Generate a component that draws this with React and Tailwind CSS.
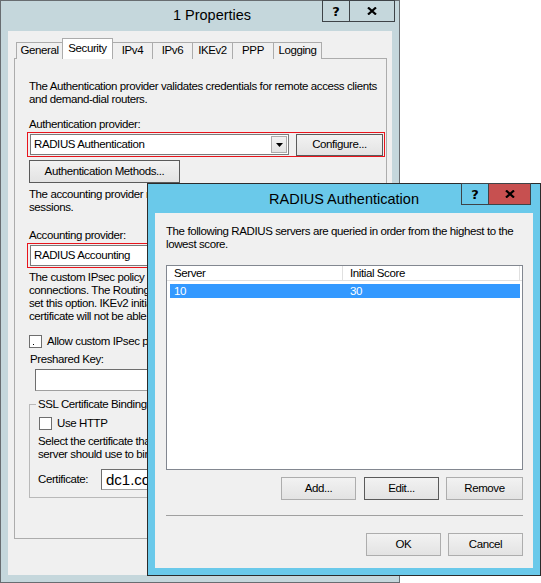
function CaptionButtons({ xw, red }) {
  return (
    <div className="flex">
      <div className="w-[28px] h-[22px] border border-[#3e4347] flex items-center justify-center text-[13px] font-bold leading-none tracking-normal font-['DejaVu_Sans',sans-serif]">
        ?
      </div>
      <div
        className={
          "-ml-px h-[22px] border border-[#3e4347] flex items-center justify-center " +
          (red ? "bg-[#c75050]" : "")
        }
        style={{ width: xw }}
      >
        <svg width="10" height="8" viewBox="0 0 10 8">
          <path d="M1 0.5 L9 7.5 M9 0.5 L1 7.5" stroke="#000" strokeWidth="2.2" />
        </svg>
      </div>
    </div>
  );
}

function Btn({ children, w, dark, h = 23 }) {
  return (
    <div
      className={
        "flex items-center justify-center border bg-linear-to-b from-[#f2f2f2] to-[#e3e3e3] shrink-0 " +
        (dark ? "border-[#5a5a5a]" : "border-[#adadad]")
      }
      style={{ width: w, height: h }}
    >
      {children}
    </div>
  );
}

function Check({ dot }) {
  return (
    <div className="relative w-[13px] h-[13px] border border-[#6e6e6e] bg-white shrink-0">
      {dot && <div className="absolute left-[3px] bottom-[2px] w-px h-px bg-black" />}
    </div>
  );
}

function Tab({ label, w, sel }) {
  return (
    <div
      className={
        "-ml-px first:ml-0 flex justify-center border-t border-l border-r border-[#acacac] whitespace-nowrap " +
        (sel ? "relative z-10 h-[21px] pt-[3px] bg-white" : "h-[17px] pt-[1px] bg-[#f0f0f0]")
      }
      style={{ width: w }}
    >
      {label}
    </div>
  );
}

function RedCombo({ text, arrow }) {
  return (
    <div className="-ml-[2px] mt-px w-[358px] h-[25px] border border-[#e8141c] flex items-center pl-[2px] pr-px shrink-0">
      <div className="w-[259px] h-[21px] border border-[#7a7a7a] bg-white flex items-center pl-[3px] relative shrink-0">
        <span className="whitespace-nowrap">{text}</span>
        {arrow && (
          <div className="absolute right-px top-px bottom-px w-[16px] border border-[#acacac] bg-linear-to-b from-[#f2f2f2] to-[#e3e3e3] flex items-center justify-center">
            <svg width="7" height="4" viewBox="0 0 7 4">
              <path d="M0 0 H7 L3.5 4 Z" fill="#000" />
            </svg>
          </div>
        )}
      </div>
      <div className="ml-[7px]">
        <Btn w={87} h={22} dark>
          Configure...
        </Btn>
      </div>
    </div>
  );
}

function OuterWindow() {
  return (
    <div className="w-[400px] h-[583px] border border-[#686d71] bg-[#c5d7dc] flex flex-col">
      <div className="relative h-[30px] shrink-0">
        <div className="pt-[6px] pl-[24px] text-center text-[14.5px] leading-[17px] tracking-normal">
          1 Properties
        </div>
        <div className="absolute top-[-1px] right-[4px]">
          <CaptionButtons xw={46} />
        </div>
      </div>
      <div className="mx-[7px] mb-[7px] flex-1 bg-[#f0f0f0] pt-[7px] pl-[6px] pr-[5px]">
        <div className="flex items-end h-[21px] -mb-px ml-[2px] relative z-10">
          <Tab label="General" w={47} />
          <Tab label="Security" w={51} sel />
          <Tab label="IPv4" w={41} />
          <Tab label="IPv6" w={41} />
          <Tab label="IKEv2" w={41} />
          <Tab label="PPP" w={42} />
          <Tab label="Logging" w={49} />
        </div>
        <div className="h-[481px] border border-[#acacac] pl-[14px] flex flex-col items-start whitespace-nowrap">
          <div className="mt-[21px]">
            The Authentication provider validates credentials for remote access clients
            <br />
            and demand-dial routers.
          </div>
          <div className="mt-[12px]">Authentication provider:</div>
          <RedCombo text="RADIUS Authentication" arrow />
          <div className="mt-[3px]">
            <Btn w={151} dark>
              Authentication Methods...
            </Btn>
          </div>
          <div className="mt-[5px]">
            The accounting provider maintains a log of connection requests and
            <br />
            sessions.
          </div>
          <div className="mt-[15px]">Accounting provider:</div>
          <RedCombo text="RADIUS Accounting" arrow />
          <div className="mt-[3px]">
            The custom IPsec policy for L2TP/IKEv2 connection allows you to
            <br />
            connections. The Routing and Remote Access service must be started to
            <br />
            set this option. IKEv2 initiator connections using a preshared key
            <br />
            certificate will not be able to connect.
          </div>
          <div className="mt-[12px] h-[13px] flex items-center gap-[5px]">
            <Check dot />
            <span>Allow custom IPsec policy for L2TP/IKEv2 connection</span>
          </div>
          <div className="mt-[5px] ml-px">Preshared Key:</div>
          <div className="mt-[3px] ml-[6px] w-[330px] h-[22px] border border-[#a0a0a0] border-t-[#6e6e6e] border-l-[#6e6e6e] bg-white shrink-0" />
          <fieldset className="mt-[7px] w-[342px] shrink-0 border border-[#b9b9b9] pl-[9px] pt-[6px] pb-[7px]">
            <legend className="-ml-[3px] px-[2px]">SSL Certificate Binding</legend>
            <div className="h-[13px] flex items-center gap-[5px]">
              <Check />
              <span>Use HTTP</span>
            </div>
            <div className="mt-[5px] -ml-px">
              Select the certificate that the remote access
              <br />
              server should use to bind with SSL connections.
            </div>
            <div className="mt-[8px] h-[21px] flex items-center -ml-px">
              <div className="w-[63px] shrink-0">Certificate:</div>
              <div className="w-[260px] h-[21px] shrink-0 border border-[#a0a0a0] border-t-[#6e6e6e] border-l-[#6e6e6e] bg-white flex items-center pl-[4px] text-[15px] tracking-normal">
                dc1.contoso.com
              </div>
            </div>
          </fieldset>
        </div>
      </div>
    </div>
  );
}

function RadiusDialog() {
  return (
    <div className="absolute left-[147px] top-[183px] w-[394px] h-[393px] border border-[#2b2b2b] bg-[#6ac9ea] flex flex-col">
      <div className="relative h-[29px] shrink-0">
        <div className="pt-[7px] text-center text-[14.5px] leading-[17px] tracking-normal">
          RADIUS Authentication
        </div>
        <div className="absolute top-[-1px] right-[9px]">
          <CaptionButtons xw={43} red />
        </div>
      </div>
      <div className="mx-[7px] mb-[7px] flex-1 bg-[#f0f0f0] pl-[11px] pr-[10px] pt-[12px] flex flex-col whitespace-nowrap">
        <div>
          The following RADIUS servers are queried in order from the highest to the
          <br />
          lowest score.
        </div>
        <div className="mt-[14px] h-[205px] border border-[#828790] bg-white">
          <div className="flex h-[15px] border-b border-[#e0e0e0]">
            <div className="w-[176px] border-r border-[#e0e0e0] pl-[7px] pt-px">Server</div>
            <div className="w-[177px] border-r border-[#e0e0e0] pl-[7px] pt-px">Initial Score</div>
          </div>
          <div className="mt-[3px] ml-[3px] w-[350px] h-[14px] bg-[#3399ff] text-white flex items-center">
            <div className="w-[176px] pl-[4px]">10</div>
            <div className="pl-[4px]">30</div>
          </div>
        </div>
        <div className="mt-[7px] flex justify-end gap-[7px]">
          <Btn w={75}>Add...</Btn>
          <div className="ml-px">
            <Btn w={75} dark>
              Edit...
            </Btn>
          </div>
          <Btn w={77}>Remove</Btn>
        </div>
        <div className="mt-[15px] h-px bg-[#a0a0a0]" />
        <div className="mt-[17px] flex justify-end gap-[7px]">
          <Btn w={75}>OK</Btn>
          <Btn w={75}>Cancel</Btn>
        </div>
      </div>
    </div>
  );
}

export default function App() {
  return (
    <div className="relative w-[541px] h-[583px] bg-white overflow-hidden font-['Liberation_Sans',Arial,sans-serif] text-[11.5px] leading-[13px] tracking-[-0.4px] text-black">
      <OuterWindow />
      <RadiusDialog />
    </div>
  );
}
